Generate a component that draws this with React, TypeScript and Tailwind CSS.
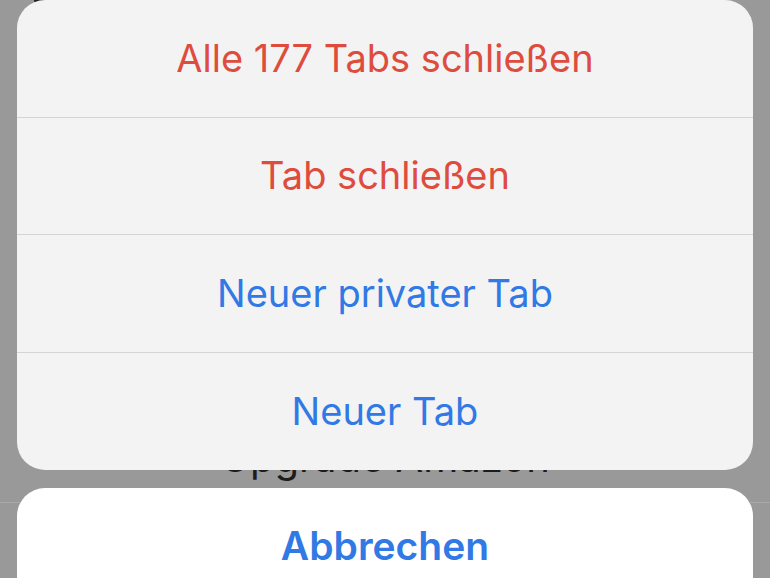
import React from 'react';

type TAction = {
  label: string;
  tone: 'destructive' | 'default';
};

const actions: TAction[] = [
  { label: 'Alle 177 Tabs schließen', tone: 'destructive' },
  { label: 'Tab schließen', tone: 'destructive' },
  { label: 'Neuer privater Tab', tone: 'default' },
  { label: 'Neuer Tab', tone: 'default' },
];

const App = () => {
  return (
    <div
      className="relative h-[578px] w-[770px] overflow-hidden bg-[#999999]"
      style={{ fontFamily: 'Inter, "Noto Sans", "Liberation Sans", sans-serif' }}
    >
      {/* dimmed page underneath the sheet */}
      <div className="flex h-full flex-col">
        <div className="ml-[34px] h-[3px] w-[12px] rounded-b-full bg-[#222222]" />
        <div className="mt-[430px] text-center text-[40px] leading-[50px] text-[#1c1c1c]">
          Upgrade Amazon
        </div>
        <div className="mt-[19px] h-px w-full bg-[#a9a9a9]" />
      </div>

      {/* action sheet */}
      <div className="absolute inset-0 flex flex-col px-[17px]">
        <div className="flex shrink-0 flex-col divide-y divide-[#d4d4d4] overflow-hidden rounded-[28px] bg-[#f3f3f3]">
          {actions.map((item) => (
            <button
              key={item.label}
              className={
                item.tone === 'destructive'
                  ? 'h-[117.5px] shrink-0 text-[38px] text-[#de4c3e]'
                  : 'h-[117.5px] shrink-0 text-[38px] text-[#3179e4]'
              }
            >
              {item.label}
            </button>
          ))}
        </div>
        <div className="mt-[18px] shrink-0 rounded-[28px] bg-white">
          <button className="h-[117px] w-full text-[39px] font-semibold text-[#3179e4]">
            Abbrechen
          </button>
        </div>
      </div>
    </div>
  );
};

export default App;
